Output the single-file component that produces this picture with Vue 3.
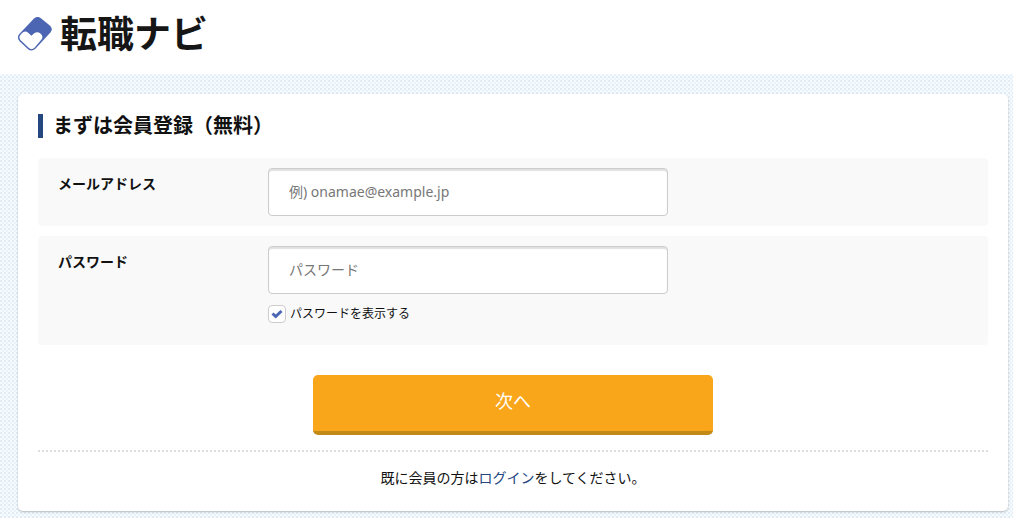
<script setup>
import { ref } from 'vue'

const email = ref('')
const password = ref('')
const showPassword = ref(true)
</script>

<template>
  <div class="page">
    <header class="header">
      <a class="brand" href="#">
        <svg class="mark" viewBox="0 0 34 34" aria-hidden="true">
          <path
            d="M16 1.600 Q19.500 -1.600 23.200 1.400 L31.800 8.400 Q35.400 11.800 32.400 15.400 L17.600 31.600 Q13.600 35.200 9.800 31.900 L1.600 24.200 Q-1.600 20.600 1.300 17 Z"
            fill="#4c66b3"
          />
          <path
            d="M3.600 16.600 Q6.800 12.900 9.900 15.600 L13.400 18.700 L16.200 16.300 Q19.400 14 22.400 16.400 Q26 19.400 23.300 22.700 L16.500 30.700 Q13.700 33.400 10.900 31.100 L2.700 23.300 Q.2 20.400 2.400 18 Z"
            fill="#fff"
          />
        </svg>
        <span class="brand-name">転職ナビ</span>
      </a>
    </header>

    <main class="card">
      <h1 class="title">まずは会員登録（無料）</h1>
      <form @submit.prevent>
        <div class="row">
          <label class="label" for="email">メールアドレス</label>
          <div class="field">
            <input id="email" v-model="email" class="text" type="email" placeholder="例) onamae@example.jp" />
          </div>
        </div>
        <div class="row row-password">
          <label class="label" for="password">パスワード</label>
          <div class="field">
            <input
              id="password"
              v-model="password"
              class="text"
              :type="showPassword ? 'text' : 'password'"
              placeholder="パスワード"
            />
            <label class="toggle" for="show">
              <span class="box">
                <input id="show" v-model="showPassword" type="checkbox" />
                <svg v-if="showPassword" viewBox="0 0 12 10" aria-hidden="true">
                  <path d="M1.500 4.500 L4.700 7.500 L10.500 2" fill="none" stroke="#4c66b3" stroke-width="3" />
                </svg>
              </span>
              <span>パスワードを表示する</span>
            </label>
          </div>
        </div>
        <button class="next" type="submit">次へ</button>
      </form>
      <p class="login">既に会員の方は<a href="#">ログイン</a>をしてください。</p>
    </main>
  </div>
</template>

<style>
body {
  margin: 0;
  background-color: #f7fbfe;
  background-image:
    radial-gradient(circle at 1px 1px, #e0edf6 1px, transparent 1px),
    radial-gradient(circle at 3px 3px, #e9f4fa 1px, transparent 1px);
  background-size: 4px 4px;
}
</style>

<style scoped>
.page {
  color: #111;
  font-family: "Noto Sans", "Noto Sans CJK JP", sans-serif;
  font-size: 14px;
  line-height: 20px;
  padding-bottom: 7px;
}
.header {
  box-sizing: border-box;
  height: 74px;
  padding: 8px 18px;
  background: #fff;
}
.brand {
  display: inline-flex;
  align-items: center;
  gap: 8px;
  height: 52px;
  color: #161616;
  text-decoration: none;
}
.mark {
  width: 34px;
  height: 34px;
}
.brand-name {
  font-family: "Noto Sans CJK JP", sans-serif;
  font-size: 37px;
  font-weight: 700;
  line-height: 48px;
  padding-bottom: 4px;
}
.card {
  margin: 20px 5px 0 18px;
  padding: 20px 20px 23px;
  background: #fff;
  border-radius: 5px;
  box-shadow: 0 1px 2px rgba(0, 0, 0, 0.25);
}
.title {
  margin: 0 0 20px;
  padding-left: 10px;
  border-left: 5px solid #24477f;
  font-size: 20px;
  line-height: 24px;
  font-weight: 700;
}
.row {
  display: flex;
  margin-bottom: 10px;
  padding: 10px 20px;
  border-radius: 4px;
  background: #f9f9f9;
}
.row-password {
  margin-bottom: 30px;
  padding-bottom: 17px;
}
.label {
  width: 210px;
  padding-top: 6px;
  font-weight: 700;
}
.field {
  flex: 1;
}
.text {
  display: block;
  box-sizing: border-box;
  width: 100%;
  max-width: 400px;
  height: 48px;
  padding: 0 20px 2px;
  border: 1px solid #ccc;
  border-radius: 4px;
  background: #fff;
  box-shadow: inset 0 2px 1px rgba(0, 0, 0, 0.12);
  color: #111;
  font-family: inherit;
  font-size: 14px;
}
.text::placeholder {
  color: #777;
}
.toggle {
  display: inline-flex;
  align-items: center;
  gap: 4px;
  width: auto;
  margin-top: 10px;
  font-size: 12px;
}
.box {
  display: grid;
  place-items: center;
}
.box > * {
  grid-area: 1 / 1;
}
.box input {
  appearance: none;
  box-sizing: border-box;
  width: 18px;
  height: 18px;
  margin: 0;
  border: 1px solid #ccc;
  border-radius: 4px;
  background: #fff;
}
.box svg {
  width: 12px;
  height: 10px;
  pointer-events: none;
}
.next {
  display: block;
  box-sizing: border-box;
  width: 100%;
  max-width: 400px;
  height: 60px;
  margin: 0 auto 15px;
  padding: 0 0 6px;
  border: 0;
  border-bottom: 4px solid #c28b18;
  border-radius: 5px;
  background: #faa61a;
  color: #fff;
  font-family: inherit;
  font-size: 18px;
}
.login {
  margin: 0;
  padding-top: 16px;
  border-top: 2px dotted #ddd;
  text-align: center;
}
.login a {
  color: #24477f;
  text-decoration: none;
}
</style>
